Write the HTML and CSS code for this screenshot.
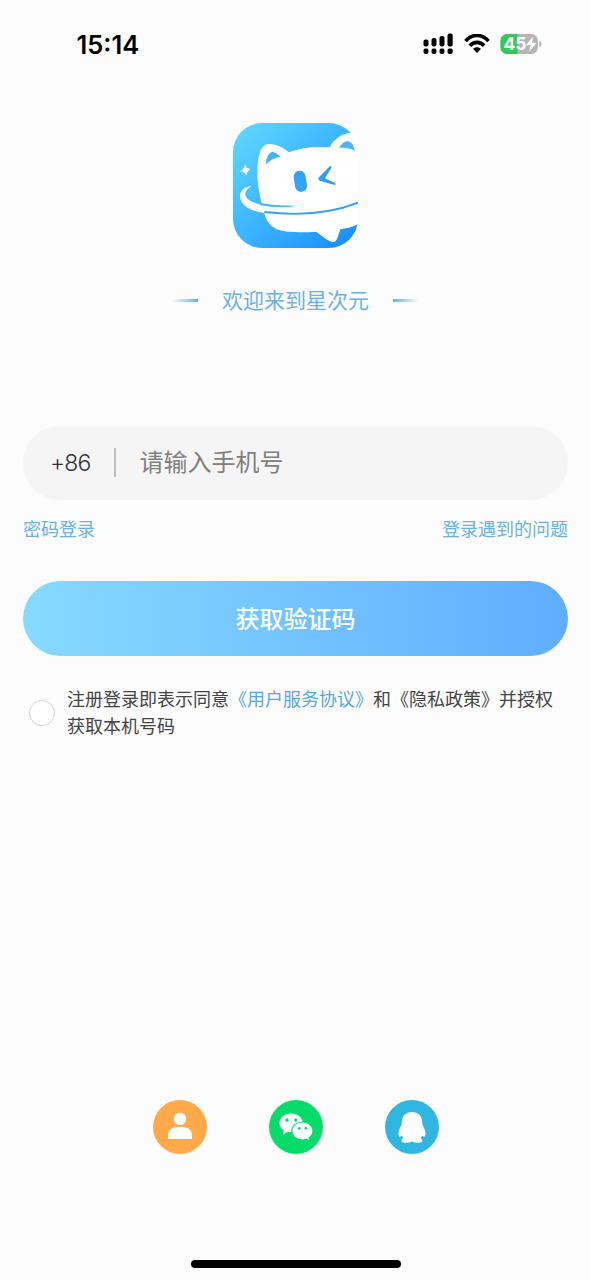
FILE: index.html
```html
<!DOCTYPE html>
<html lang="zh-CN">
<head>
<meta charset="utf-8">
<meta name="viewport" content="width=device-width, initial-scale=1">
<title>登录</title>
<link rel="stylesheet" href="styles.css">
</head>
<body>
<div class="screen">
  <header class="status">
    <span class="time">15:14</span>
    <div class="indicators">
      <svg class="signal" width="30" height="22" viewBox="0 0 30 22">
        <rect x="0.500" y="6.500" width="5" height="7" rx="2"/><rect x="8.500" y="5" width="5" height="8.500" rx="2"/><rect x="16.500" y="3" width="5" height="10.500" rx="2"/><rect x="24.500" y="0.500" width="5.200" height="13" rx="2"/>
        <rect x="0.500" y="15.500" width="5" height="5.500" rx="2"/><rect x="8.500" y="15.500" width="5" height="5.500" rx="2"/><rect x="16.500" y="15.500" width="5" height="5.500" rx="2"/><rect x="24.500" y="15.500" width="5.200" height="5.500" rx="2"/>
      </svg>
      <svg class="wifi" width="26" height="20" viewBox="0 0 26 20">
        <g fill="none" stroke="#000" stroke-width="3.600"><path d="M1.500 7.200C8-0.400 18-0.400 24.500 7.200"/><path d="M5.800 11.700C9.900 7.200 16.100 7.200 20.200 11.700"/></g>
        <path d="M9 14.800C11.500 12.700 14.500 12.700 17 14.800L13 19Z"/>
      </svg>
      <svg class="battery" width="42" height="22" viewBox="0 0 42 22">
        <defs><clipPath id="cell"><rect x="0.500" y="1" width="37.500" height="20" rx="6.500"/></clipPath></defs>
        <g clip-path="url(#cell)"><rect width="38" height="22" fill="#b5b5b5"/><rect width="17.500" height="22" fill="#34c759"/></g>
        <path d="M39.200 8Q41.500 8.500 41.500 11Q41.500 13.500 39.200 14Z" fill="#b5b5b5"/>
        <text class="level" x="3.500" y="17.200" textLength="23" lengthAdjust="spacingAndGlyphs">45</text>
        <path d="M33 3.500L26 12.200H30.600L29 18.800L36.800 9.700H32Z" fill="#fff"/>
      </svg>
    </div>
  </header>

  <main class="content">
    <svg class="logo" width="125" height="125" viewBox="24 24 375 375">
      <defs>
        <linearGradient id="sky" x1="0" y1="0" x2="1" y2="1"><stop offset="0.060" stop-color="#5dd5ff"/><stop offset="0.500" stop-color="#3bb4fd"/><stop offset="1" stop-color="#168afa"/></linearGradient>
        <linearGradient id="ear" x1="0" y1="0" x2="1" y2="1"><stop offset="0" stop-color="#38aff5"/><stop offset="1" stop-color="#5abcf8"/></linearGradient>
      </defs>
      <rect x="24" y="24" width="375" height="375" rx="88" fill="url(#sky)"/>
      <path fill="#fff" d="M118 293C105 250 96 208 97 165C98 128 105 98 121 89C144 82 174 97 192 112C230 98 272 93 314 97C326 74 350 54 376 54L399 54V327C380 338 362 340 346 343C341 358 337 376 329 381C314 383 293 365 274 350C240 352 195 354 165 346C138 337 122 318 118 293Z"/>
      <path fill="url(#ear)" d="M123 148C124 124 133 109 144 111C153 113 160 119 166 125C147 129 135 136 123 148ZM342 99C350 85 360 77 371 79C382 83 387 96 390 108C375 100 359 97 342 99Z"/>
      <rect x="208" y="167" width="36" height="64" rx="18" fill="#35a3f4" transform="rotate(-9 226 199)"/>
      <path d="M315 153Q320 152 319 159L300 190L330 204Q334 208 329 210L284 197Q277 193 282 187Z" fill="#2d9ef8"/>
      <path fill="#fff" d="M80 213C55 215 43 231 45 246C49 275 83 290 125 295C220 307 320 297 399 270V257C320 288 207 294 125 274C90 266 64 256 61 240C59 228 70 219 80 213Z"/>
      <path d="M104 263C138 270 175 273 216 272C181 279 144 278 108 271Z" fill="#48b8fa"/>
      <path d="M118 291C220 303 320 294 399 263" fill="none" stroke="#369ff5" stroke-width="5.500"/>
      <path fill="#fff" d="M60 149Q64 160 76 162Q67 168 64 181Q58 170 45 169Q57 163 60 149Z"/>
    </svg>

    <div class="welcome"><i class="dash dash-left"></i><span>欢迎来到星次元</span><i class="dash dash-right"></i></div>

    <div class="phone"><span class="code">+86</span><i class="divider"></i><span class="placeholder">请输入手机号</span></div>
    <div class="links"><a>密码登录</a><a>登录遇到的问题</a></div>
    <button class="submit" type="button">获取验证码</button>
    <div class="agreement">
      <i class="radio"></i>
      <div class="terms">
        <div class="line"><span>注册登录即表示同意</span><a>《用户服务协议》</a><span>和《隐私政策》并授权</span></div>
        <div class="line">获取本机号码</div>
      </div>
    </div>
  </main>

  <footer class="social">
    <svg width="54" height="54" viewBox="0 0 54 54">
      <circle cx="27" cy="27" r="27" fill="#ffa94a"/>
      <circle cx="27" cy="19" r="6.200" fill="#fff"/><path fill="#fff" d="M15 39V36C15 30 19 27 24 27H30C35 27 39 30 39 36V39Z"/>
    </svg>
    <svg width="54" height="54" viewBox="0 0 54 54">
      <circle cx="27" cy="27" r="27" fill="#07dc6b"/>
      <path fill="#fff" d="M22 13.500C15.500 13.500 10.500 17.800 10.500 23C10.500 26.200 12.200 28.800 15 30.500L14 34.500L18.800 31.700Q21.500 32.500 24 32L34 23C33.500 17.500 28.500 13.500 22 13.500Z"/>
      <path fill="#fff" stroke="#07dc6b" stroke-width="1.200" d="M33.400 22C27.400 22 22.800 26 22.800 31C22.800 36 27.400 40 33.400 40Q35.600 40 37.400 39.300L41 41.300L40.100 37.800C42.600 36.200 44 33.800 44 31C44 26 39.400 22 33.400 22Z"/>
      <g fill="#07dc6b"><circle cx="18" cy="20" r="1.700"/><circle cx="26.800" cy="20" r="1.700"/><circle cx="30.300" cy="28.300" r="1.400"/><circle cx="37" cy="28.300" r="1.400"/></g>
    </svg>
    <svg width="54" height="54" viewBox="0 0 54 54">
      <circle cx="27" cy="27" r="27" fill="#31b6e2"/>
      <path fill="#fff" d="M27 12C20.500 12 17 16.300 16.800 22Q16.800 24 16 26C14 29 12.900 33.200 13.800 36C14.500 37.500 16 36.500 16.800 35.500Q17.500 37 18.500 38.200C16 39 15.800 42 18.500 42.500C21.500 43.200 25 42.600 27 41.200C29 42.600 32.500 43.200 35.500 42.500C38.200 42 38 39 35.500 38.200Q36.500 37 37.200 35.500C38 36.500 39.500 37.500 40.200 36C41.100 33.200 40 29 38 26Q37.200 24 37.200 22C37 16.300 33.500 12 27 12Z"/>
    </svg>
  </footer>
  <div class="home"></div>
</div>
</body>
</html>
```
FILE: styles.css
```css
* { box-sizing: border-box; }
body { margin: 0; background: #fcfcfc; font-family: "Liberation Sans", "Noto Sans CJK SC", sans-serif; }
.screen { display: flex; flex-direction: column; align-items: center; width: 591px; height: 1280px; overflow: hidden; }
.status { display: flex; align-items: center; justify-content: space-between; width: 100%; height: 88px; padding: 0 49px 0 76.5px; flex: none; }
.time { padding-top: 1px; font: 600 25.5px/30px Inter, sans-serif; color: #000; letter-spacing: 0; }
.indicators { display: flex; align-items: center; }
.wifi { margin: 0 10px 0 11px; }
.level { font: 700 18px Inter, sans-serif; fill: #fff; }
.content { display: flex; flex-direction: column; align-items: center; width: 545px; padding-top: 35px; }
.logo { display: block; }
.welcome { display: flex; align-items: center; gap: 24px; height: 32px; margin-top: 36.5px; font-size: 21px; line-height: 32px; color: #6bb1e4; }
.dash { width: 26px; height: 3px; }
.dash-left { background: linear-gradient(90deg, #fcfcfc, #68b0e3); }
.dash-right { background: linear-gradient(90deg, #68b0e3, #fcfcfc); }
.phone { display: flex; align-items: center; width: 100%; height: 74px; margin-top: 109px; padding-left: 27px; border-radius: 37px; background: #f5f5f5; font-size: 24px; line-height: 36px; }
.code { width: 64px; color: #333; font: 300 23px/36px Inter, sans-serif; letter-spacing: -0.8px; }
.divider { width: 2px; height: 29px; background: #bdbdbd; margin-right: 23.5px; }
.placeholder { color: #808080; }
.links { display: flex; justify-content: space-between; width: 100%; margin-top: 17px; font-size: 18px; line-height: 27px; color: #6bb1e4; }
.submit { width: 100%; height: 75px; margin-top: 37.5px; padding: 0 0 1px; border: 0; border-radius: 38px; background: linear-gradient(90deg, #87daff, #60adff); color: #fff; font: 500 24px/36px "Noto Sans CJK SC", sans-serif; }
.agreement { display: flex; align-items: center; gap: 12px; width: 100%; margin-top: 29px; padding-left: 6px; }
.radio { flex: none; width: 26px; height: 26px; border: 1.5px solid #d2d2d2; border-radius: 50%; background: #fff; }
.terms { padding-top: 2px; font-size: 18px; line-height: 27px; color: #444; text-spacing-trim: space-all; }
.line { display: flex; }
.terms a { color: #58a6dd; }
.social { display: flex; gap: 62px; margin-top: auto; margin-bottom: 106.5px; }
.social svg { display: block; }
.home { flex: none; width: 210px; height: 8px; margin-bottom: 12px; border-radius: 4px; background: #000; }
```
